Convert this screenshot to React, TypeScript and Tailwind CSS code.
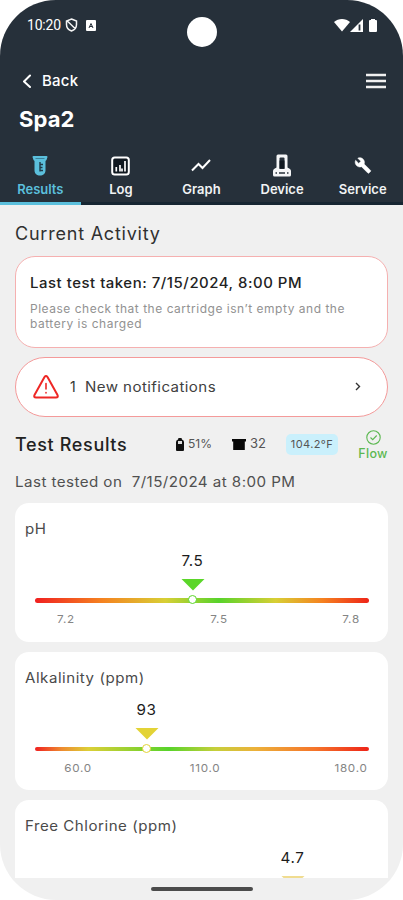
import type { ReactNode } from "react";

type Tick = { label: string; at: number };

function Tab({ label, active = false, children }: { label: string; active?: boolean; children: ReactNode }) {
  return (
    <button
      className={`flex h-[55px] w-1/5 flex-col items-center border-b-[3px] text-[13px] leading-4 font-semibold ${
        active ? "border-[#5bbfdc] text-[#5bbfdc]" : "border-[#172632] text-[#f1f3f4]"
      }`}
    >
      <span className="flex h-[31px] items-center justify-center">{children}</span>
      <span className="whitespace-nowrap">{label}</span>
    </button>
  );
}

function Gauge({
  title,
  value,
  at,
  color,
  gradient,
  ticks,
}: {
  title: string;
  value: string;
  at: number;
  color: string;
  gradient: string;
  ticks: Tick[];
}) {
  return (
    <section className="h-[138.5px] shrink-0 rounded-[14px] bg-white pt-[16px] pr-[19px] pl-[10px]">
      <h3 className="h-5 origin-left scale-x-[1.075] text-[14px] leading-5 tracking-[0.5px] text-[#4a4a4a]">{title}</h3>
      <div className="relative ml-[10px] h-[72px] pt-[59px]">
        <div className={`h-[4.5px] rounded-full ${gradient}`} />
        <div className="absolute top-[12px] flex w-12 -translate-x-1/2 flex-col items-center" style={{ left: `${at}%` }}>
          <span className="h-5 scale-x-[1.05] text-[14.5px] leading-5 tracking-[0.6px] text-[#1c1c1c]">{value}</span>
          <svg width="24" height="12" viewBox="0 0 24 12" className="mt-[8px]" fill={color}>
            <path d="M0.500 0H23.500L12 11.500Z" />
          </svg>
          <span className="mt-[4px] size-[9px] rounded-full border bg-white" style={{ borderColor: color }} />
        </div>
      </div>
      <div className="relative ml-[10px] h-4 text-[11px] leading-4 tracking-[0.7px] text-[#858585]">
        {ticks.map((t) => (
          <span key={t.label} className="absolute top-0 -translate-x-1/2 scale-x-[1.06]" style={{ left: `${t.at}%` }}>
            {t.label}
          </span>
        ))}
      </div>
    </section>
  );
}

export default function App() {
  return (
    <div className="h-[900px] w-[403px] bg-white font-['Inter','Liberation_Sans',sans-serif]">
      <div className="flex h-full flex-col overflow-hidden rounded-[56px] bg-[#f0f0f0]">
        <header className="flex h-[205px] shrink-0 flex-col bg-[#26303a] text-white">
          <div className="flex h-[50px] shrink-0 items-center pr-[25px] pl-[27px]">
            <span className="w-[34px] font-['Roboto',sans-serif] text-[14px] tracking-[-0.2px]">10:20</span>
            <svg width="13" height="14" viewBox="0 0 13 14" className="ml-[4px]" fill="none" stroke="#f4f4f4" strokeWidth="1.500">
              <path d="M6.500 1L11.500 3V6.500C11.500 9.800 9.200 12 6.500 13C3.800 12 1.500 9.800 1.500 6.500V3ZM2.300 3L10.600 11" />
            </svg>
            <svg width="10" height="11" viewBox="0 0 10 11" className="ml-[8px]">
              <rect width="10" height="11" rx="1" fill="#fff" />
              <path d="M3 8L5 3.500L7 8M3.700 6.500H6.300" fill="none" stroke="#27303a" />
            </svg>
            <span className="mt-[14px] ml-[91px] size-[30px] rounded-full bg-white" />
            <svg width="44" height="15" viewBox="0 0 44 15" className="ml-auto" fill="#fff">
              <path d="M0 4C4.500 0 11.500 0 16 4L8 13.500Z" />
              <path d="M16 14L29 1V14Z" />
              <path d="M25.500 6.500V12.500" stroke="#27303a" strokeWidth="1.800" />
              <path d="M36 2H37V1H41V2H42Q43 2 43 3V13Q43 14 42 14H36Q35 14 35 13V3Q35 2 36 2Z" />
            </svg>
          </div>
          <div className="flex h-[62px] shrink-0 items-center pr-[17px] pl-[22px]">
            <svg width="10" height="14" viewBox="0 0 10 14" fill="none" stroke="#fff" strokeWidth="2" strokeLinecap="round" strokeLinejoin="round">
              <path d="M8 1.500L2 7.500L8 13" />
            </svg>
            <span className="ml-[10px] text-[15px] font-medium tracking-[0.2px]">Back</span>
            <svg width="20" height="16" viewBox="0 0 20 16" className="ml-auto">
              <path d="M0 2H20M0 8H20M0 14H20" stroke="#f0f0f0" strokeWidth="2.400" />
            </svg>
          </div>
          <h1 className="h-[38px] shrink-0 pl-[19px] text-[22px] leading-[14px] font-bold tracking-[0.1px]">Spa2</h1>
          <nav className="flex">
            <Tab label="Results" active>
              <svg width="16" height="21" viewBox="0 0 16 21" fill="#5bbfdc">
                <path d="M1.500 1H14.500Q15.500 1 15.500 2L14.500 5L13.500 6V15.500C13.500 18.500 11 20.500 8 20.500S2.500 18.500 2.500 15.500V6L1.500 5L0.500 2Q0.500 1 1.500 1Z" />
                <path d="M3.500 3.500H12.500" stroke="#3b8199" />
                <path d="M8 7V16.500M8.500 9.500H11M8.500 12.500H10.500M8.500 15.500H11" stroke="#203a48" strokeWidth="1.400" />
              </svg>
            </Tab>
            <Tab label="Log">
              <svg width="19" height="20" viewBox="0 0 19 20" fill="none" stroke="#fff" strokeWidth="2">
                <rect x="1.200" y="1.500" width="16.600" height="17" rx="2.500" fill="#101820" />
                <path d="M5.300 11V15.500M9 9V15.500M11 12.500V15.500M14 5V15.500" strokeWidth="1.700" />
              </svg>
            </Tab>
            <Tab label="Graph">
              <svg width="20" height="13" viewBox="0 0 20 13" fill="none" stroke="#fff" strokeWidth="2">
                <path d="M1 11.500L7.500 5L11.500 9L19 1" />
              </svg>
            </Tab>
            <Tab label="Device">
              <svg width="20" height="23" viewBox="0 0 20 23">
                <path
                  d="M6 0.500H14Q15.500 0.500 15.500 2V13.500L18 15Q19 15.800 19 17V21Q19 22.500 17.500 22.500H2.500Q1 22.500 1 21V17Q1 15.800 2 15L4.500 13.500V2Q4.500 0.500 6 0.500Z"
                  fill="#f5f6f7"
                />
                <path d="M7.500 4.500Q7.500 3.500 8.500 3.500H11.500Q12.500 3.500 12.500 4.500V15H7.500Z" fill="#27303a" />
                <path d="M7.500 6.500H12.500V14.500H7.500Z" fill="#101820" />
                <path d="M3.500 19H5M7 19H13M15 19H16.500" stroke="#27303a" strokeWidth="1.500" />
              </svg>
            </Tab>
            <Tab label="Service">
              <svg width="18" height="17" viewBox="0 0 24 24" fill="#fff" stroke="#fff" strokeWidth="0.800">
                <path d="M22.700 19l-9.100-9.100c.9-2.300.4-5-1.500-6.900-2-2-5-2.400-7.400-1.300L9 6 6 9 1.600 4.700C.4 7.100.9 10.100 2.900 12.100c1.900 1.900 4.600 2.400 6.900 1.500l9.100 9.100c.4.4 1 .4 1.400 0l2.300-2.300c.5-.4.5-1.100.1-1.400z" />
              </svg>
            </Tab>
          </nav>
        </header>

        <main className="flex h-[673px] shrink-0 flex-col overflow-hidden px-[15px]">
          <h2 className="h-[51px] shrink-0 pt-[16.5px] text-[18px] leading-6 tracking-[0.780px] text-[#303030]">Current Activity</h2>
          <section className="h-[92px] shrink-0 rounded-[20px] border border-[#f5b0b0] bg-white px-[14px] pt-[16px]">
            <h3 className="origin-left scale-x-[1.066] text-[14px] leading-5 font-medium tracking-[0.5px] whitespace-nowrap text-[#222]">
              Last test taken: 7/15/2024, 8:00 PM
            </h3>
            <p className="mt-[9px] origin-left scale-x-[1.042] text-[11.5px] leading-[15px] tracking-[0.5px] whitespace-nowrap text-[#929292]">
              Please check that the cartridge isn’t empty and the
              <br />
              battery is charged
            </p>
          </section>
          <section className="mt-[9px] flex h-[60px] shrink-0 items-center rounded-full border border-[#f49a9a] bg-white pr-[26px] pb-px pl-[17px]">
            <svg width="26" height="24" viewBox="0 0 26 24" fill="none" stroke="#ee2725" strokeWidth="2" strokeLinecap="round" strokeLinejoin="round">
              <path d="M11.500 2Q13 0 14.500 2L24.500 20Q25.500 22.500 23 22.500H3Q0.500 22.500 1.500 20Z" />
              <path d="M13 8.500V14M13 17.500V18" strokeWidth="1.600" />
            </svg>
            <span className="ml-[11px] text-[14px] text-[#333]">1</span>
            <span className="ml-[9px] origin-left scale-x-[1.075] text-[14px] tracking-[0.4px] text-[#404040]">New notifications</span>
            <svg width="6" height="9" viewBox="0 0 6 9" className="ml-auto" fill="none" stroke="#333" strokeWidth="1.400">
              <path d="M1 1L4.500 4.500L1 8" />
            </svg>
          </section>
          <div className="flex h-[54px] shrink-0 items-center text-[#555]">
            <h2 className="w-[161px] shrink-0 text-[18px] font-medium tracking-[0.650px] text-[#222]">Test Results</h2>
            <svg width="8" height="13" viewBox="0 0 8 13" className="shrink-0">
              <path d="M2.500 0H5.500L6 1.500Q8 2 8 4V12Q8 13 7 13H1Q0 13 0 12V4Q0 2 2 1.500Z" fill="#111" />
              <path d="M2 3H6V6H2Z" fill="#ddd" />
            </svg>
            <span className="ml-[4px] w-[44px] shrink-0 text-[12px]">51%</span>
            <svg width="14" height="11" viewBox="0 0 14 11" className="shrink-0">
              <path d="M0 0H14V2.500H12.800V11H1.200V2.500H0Z" fill="#080808" />
            </svg>
            <span className="ml-[4px] w-[36px] shrink-0 text-[13px]">32</span>
            <span className="flex h-[21px] w-[52px] shrink-0 items-center justify-center rounded-[5px] bg-[#caf0fc] text-[11px] tracking-[0.4px]">104.2°F</span>
            <div className="mt-[3px] ml-[19px] flex w-[32px] shrink-0 flex-col items-center text-[#5cb851]">
              <svg width="15" height="15" viewBox="0 0 15 15" fill="none" stroke="#5cb851" strokeWidth="1.100">
                <circle cx="7.500" cy="7.500" r="6.700" />
                <path d="M4.500 7.500L6.700 9.700L10.700 5.500" />
              </svg>
              <span className="text-[12.500px] leading-[17px] font-medium tracking-[0.3px]">Flow</span>
            </div>
          </div>
          <p className="h-[32px] shrink-0 origin-left scale-x-[1.083] text-[14px] leading-[22px] tracking-[0.4px] whitespace-pre text-[#505050]">
            Last tested on  7/15/2024 at 8:00 PM
          </p>
          <div className="flex flex-col gap-[10px]">
            <Gauge
              title="pH"
              value="7.5"
              at={47.2}
              color="#5bd629"
              gradient="bg-[linear-gradient(90deg,#f02020_0%,#f58220_20%,#d8cf35_39%,#58d32b_55%,#d8cf35_72%,#f58220_86%,#ee2418_100%)]"
              ticks={[
                { label: "7.2", at: 9.4 },
                { label: "7.5", at: 55 },
                { label: "7.8", at: 94.7 },
              ]}
            />
            <Gauge
              title="Alkalinity (ppm)"
              value="93"
              at={33.4}
              color="#e3d336"
              gradient="bg-[linear-gradient(90deg,#f02020_0%,#ee8b30_8%,#dccf37_16%,#58d32b_40%,#c6cf3b_54%,#ecb13a_66%,#f5742a_84%,#ee2418_100%)]"
              ticks={[
                { label: "60.0", at: 13 },
                { label: "110.0", at: 51 },
                { label: "180.0", at: 94.7 },
              ]}
            />
            <Gauge title="Free Chlorine (ppm)" value="4.7" at={77.2} color="#f0dc90" gradient="bg-[#58d32b]" ticks={[]} />
          </div>
        </main>
        <footer className="flex h-[22px] shrink-0 justify-center pt-[9px]">
          <span className="h-[4px] w-[102px] rounded-full bg-[#4b4b4b]" />
        </footer>
      </div>
    </div>
  );
}
